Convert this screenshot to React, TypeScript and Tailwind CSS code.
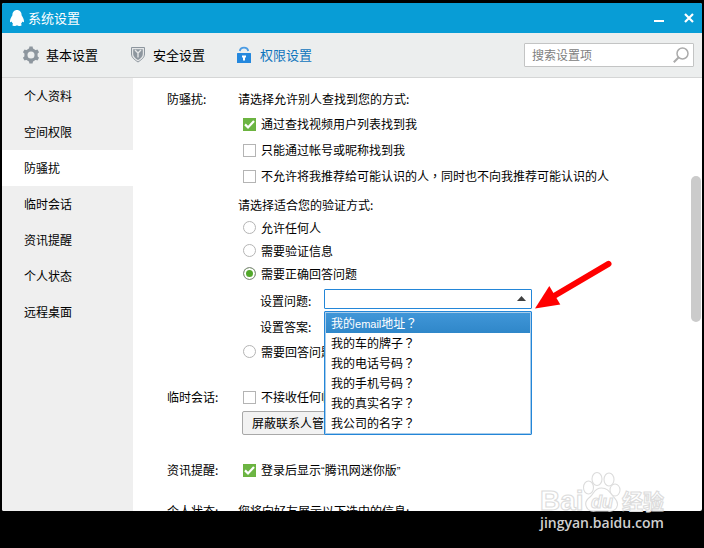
import React, { useState } from 'react';

const sidebarItems = ['个人资料', '空间权限', '防骚扰', '临时会话', '资讯提醒', '个人状态', '远程桌面'];

const questions = [
  '我的email地址？',
  '我的车的牌子？',
  '我的电话号码？',
  '我的手机号码？',
  '我的真实名字？',
  '我公司的名字？',
];

const PenguinIcon = () => (
  <svg width="16" height="18" viewBox="0 0 16 18" fill="#fff" aria-hidden="true">
    <path d="M8 1C5.2 1 3.4 3.2 3.4 6.2C2.2 8 1 10.2 1 12.2C1 13.4 1.8 13.4 2.7 12.4C3 13.5 3.5 14.3 4.2 15C2.8 15.7 3 17 5.2 17C6.6 17 7.5 16.7 8 16.2C8.5 16.7 9.4 17 10.8 17C13 17 13.2 15.7 11.8 15C12.5 14.3 13 13.5 13.3 12.4C14.2 13.4 15 13.4 15 12.2C15 10.2 13.8 8 12.6 6.2C12.6 3.2 10.8 1 8 1Z" />
  </svg>
);

const GearIcon = () => (
  <svg width="18" height="18" viewBox="0 0 18 18" aria-hidden="true">
    <circle cx="9" cy="9" r="5.1" fill="none" stroke="#8d969e" strokeWidth="3.2" />
    <g fill="#8d969e">
      {[0, 60, 120, 180, 240, 300].map((deg) => (
        <path key={deg} d="M6.8 3.6L7.4 0.6H10.6L11.2 3.6Z" transform={`rotate(${deg} 9 9)`} />
      ))}
    </g>
  </svg>
);

const ShieldIcon = () => (
  <svg width="18" height="18" viewBox="-1 1 18 18" aria-hidden="true">
    <path d="M1.5 2.500H14.5V9C14.5 12.4 11.8 14.6 8 17C4.2 14.6 1.5 12.4 1.5 9Z" fill="#e4e6e7" stroke="#8d969e" />
    <path d="M3.2 4.2H12.8V9C12.8 11.6 10.8 13.2 8 15C5.2 13.2 3.2 11.6 3.2 9Z" fill="#8d969e" />
    <path d="M5 5L8 8L11 5M8 8V12.500" fill="none" stroke="#e4e6e7" strokeWidth="1.4" />
  </svg>
);

const LockIcon = () => (
  <svg width="18" height="18" viewBox="0 0 18 18" aria-hidden="true">
    <path d="M3.800 5C4.500 0.600 11.500 0.600 12.200 5" fill="none" stroke="#4a9be3" strokeWidth="1.8" />
    <rect x="1" y="7" width="14" height="10" rx="0.6" fill="#2488de" />
    <path d="M6 9.6H10V11.4H9V14.4H7V11.4H6Z" fill="#fff" />
  </svg>
);

const tabs = [
  { name: '基本设置', icon: <GearIcon /> },
  { name: '安全设置', icon: <ShieldIcon /> },
  { name: '权限设置', icon: <LockIcon /> },
];

// latin words and quotes get a narrow face, full-width marks one that centres them
const MixedText: React.FC<{ text: string }> = ({ text }) => (
  <span>
    {text.split(/([a-z“”]+|[，？])/).map((part, i) => {
      if (/^[a-z“”]+$/.test(part)) {
        return <span key={i} className="font-['Liberation_Sans',sans-serif] text-[11px]">{part}</span>;
      }
      if (/^[，？]$/.test(part)) {
        return <span key={i} className="font-['Noto_Sans_CJK_TC',sans-serif]">{part}</span>;
      }
      return part;
    })}
  </span>
);

interface CheckProps {
  id: string;
  label: string;
  defaultChecked?: boolean;
}

const CheckRow: React.FC<CheckProps> = ({ id, label, defaultChecked }) => (
  <div className="flex h-[26px] items-center gap-[5px] pl-[5px]">
    <span className="grid shrink-0">
      <input
        id={id}
        type="checkbox"
        defaultChecked={defaultChecked}
        className="peer col-start-1 row-start-1 size-[13px] appearance-none border border-[#b4b4b4] bg-white checked:border-[#6cb33f] checked:bg-[#6cb544]"
      />
      <svg
        className="pointer-events-none invisible col-start-1 row-start-1 peer-checked:visible"
        width="13"
        height="13"
        viewBox="0 0 13 13"
        aria-hidden="true"
      >
        <path d="M2 6.4L5 9.4L11 3" fill="none" stroke="#fff" strokeWidth="2.2" />
      </svg>
    </span>
    <label htmlFor={id} className="whitespace-nowrap">
      <MixedText text={label} />
    </label>
  </div>
);

const RadioRow: React.FC<CheckProps> = ({ id, label, defaultChecked }) => (
  <div className="flex h-[23px] items-center gap-[5px] pl-[5px]">
    <input
      id={id}
      type="radio"
      name="verify"
      defaultChecked={defaultChecked}
      className="size-[13px] shrink-0 appearance-none rounded-full border border-[#b4b4b4] bg-white checked:border-[#8c8c8c] checked:bg-[#52a82b] checked:shadow-[inset_0_0_0_2px_white]"
    />
    <label htmlFor={id} className="whitespace-nowrap">{label}</label>
  </div>
);

interface SectionProps {
  title: string;
  titleClass?: string;
  className?: string;
  children: React.ReactNode;
}

const Section: React.FC<SectionProps> = ({ title, titleClass = 'h-[26px]', className = '', children }) => (
  <section className={`flex ${className}`}>
    <h2 className={`flex w-[71px] shrink-0 items-center ${titleClass}`}>{title}</h2>
    <div className="min-w-0 flex-1">{children}</div>
  </section>
);

const QuestionSelect = () => {
  const [active, setActive] = useState(0);

  return (
    <div className="relative h-[26px] w-[208px] pt-px">
      <select
        id="question"
        defaultValue=""
        className="block h-5 w-full appearance-none rounded-[1px] border border-[#2386d8] bg-white px-1.5"
      >
        <option value=""></option>
        {questions.map((q) => (
          <option key={q} value={q}>{q}</option>
        ))}
      </select>
      <svg className="pointer-events-none absolute top-2 right-1.5" width="9" height="5" viewBox="0 0 9 5" aria-hidden="true">
        <path d="M4.5 0L9 5H0Z" fill="#404040" />
      </svg>

      <ul
        role="listbox"
        aria-label="设置问题"
        className="absolute top-[23px] left-0 z-10 w-full rounded-[1px] border border-[#2386d8] bg-white p-px shadow-[inset_0_0_0_1px_#a9cdeb]"
      >
        {questions.map((q, i) => (
          <li
            key={q}
            role="option"
            aria-selected={i === active}
            onMouseEnter={() => setActive(i)}
            className={`flex h-5 items-center px-[5px] ${
              i === active ? 'bg-linear-to-b from-[#4096d8] to-[#2f87c9] text-white' : 'text-black'
            }`}
          >
            <MixedText text={q} />
          </li>
        ))}
      </ul>

      {/* red pointer */}
      <svg className="pointer-events-none absolute -top-7 left-[211px] z-20" width="78" height="50" viewBox="0 0 78 50" aria-hidden="true">
        <path d="M19 36L73.5 3.8" stroke="#f00" strokeWidth="6" strokeLinecap="round" />
        <path d="M0 48.5L14.3 26L25.3 44.5Z" fill="#f00" />
      </svg>
    </div>
  );
};

const Watermark = () => (
  <div className="pointer-events-none absolute right-[38px] bottom-[17px] w-[126px]" aria-hidden="true">
    <svg width="126" height="45" viewBox="0 0 126 45" className="block">
      <g fill="#fff" stroke="#dcdcdc" strokeWidth="1.1">
        <text x="0" y="40" fontSize="28" fontWeight="700" fontFamily="Liberation Sans, sans-serif">Bai</text>
        <text x="82" y="39" fontSize="21" fontWeight="700" fontFamily="Noto Sans CJK SC, sans-serif">经验</text>
        <ellipse cx="48.500" cy="17.500" rx="5" ry="6.500" />
        <ellipse cx="57" cy="9" rx="5" ry="6.500" />
        <ellipse cx="69" cy="9.500" rx="5" ry="6.500" />
        <ellipse cx="75" cy="20" rx="5" ry="6" />
        <path d="M61.500 18C54 18 54 24 50 27C46 30 45 34 46.500 37C48 41 52 41.500 56 41H68C73 42 77 39 77.500 35C78 30 74 28 72 25C69 21 67 18 61.500 18Z" />
        <text x="51" y="38" fontSize="18" fontWeight="700" fontStyle="italic" fontFamily="Liberation Sans, sans-serif">du</text>
      </g>
    </svg>
    <p className="font-['Open_Sans',sans-serif] text-sm leading-4 font-semibold whitespace-nowrap text-[#cfcfcf]">jingyan.baidu.com</p>
  </div>
);

const App = () => {
  const [section, setSection] = useState('防骚扰');

  return (
    <div className="relative flex h-screen flex-col bg-black px-0.5 pt-[3px] pb-[37px] font-['Noto_Sans_CJK_SC',sans-serif] text-xs text-black">
      <div className="flex min-h-0 flex-1 flex-col overflow-hidden rounded-[2px] bg-white">
        <header className="flex h-[30px] shrink-0 items-center bg-[#089dd6] pr-2 pl-[7px] text-white">
          <PenguinIcon />
          <h1 className="ml-[3px] flex-1 text-[13px]">系统设置</h1>
          <button type="button" aria-label="最小化" className="mr-5">
            <svg width="10" height="10" viewBox="0 0 10 10">
              <path d="M0 8H10" stroke="#fff" strokeWidth="2" />
            </svg>
          </button>
          <button type="button" aria-label="关闭">
            <svg width="10" height="10" viewBox="0 0 10 10">
              <path d="M1 1L9 9M9 1L1 9" stroke="#fff" strokeWidth="2.2" />
            </svg>
          </button>
        </header>

        <nav className="flex h-[45px] shrink-0 items-center border-b border-[#d5d6d6] bg-[#eceeee] pr-2 pl-5">
          <div className="flex flex-1 gap-[31px] text-[13px]">
            {tabs.map((tab) => (
              <button
                key={tab.name}
                type="button"
                className={`flex items-center gap-1.5 ${tab.name === '权限设置' ? 'text-[#0f75bd]' : 'text-black'}`}
              >
                {tab.icon}
                {tab.name}
              </button>
            ))}
          </div>
          <div className="flex h-6 w-[170px] items-center rounded-[1px] border border-[#c3c4c4] bg-white pr-1 pl-[7px]">
            <input
              type="text"
              aria-label="搜索设置项"
              placeholder="搜索设置项"
              className="min-w-0 flex-1 outline-none placeholder:text-[#808080]"
            />
            <svg width="16" height="16" viewBox="0 0 16 16" fill="none" stroke="#ababab" aria-hidden="true">
              <circle cx="9.500" cy="6.500" r="5.500" strokeWidth="1.5" />
              <path d="M5.500 10.500L0.800 15.200" strokeWidth="2" />
            </svg>
          </div>
        </nav>

        <div className="flex min-h-0 flex-1">
          <aside className="w-[131px] shrink-0 bg-[#efefef]">
            {sidebarItems.map((item) => (
              <button
                key={item}
                type="button"
                onClick={() => setSection(item)}
                className={`flex h-9 w-full items-center pl-[22px] ${item === section ? 'bg-white' : ''}`}
              >
                {item}
              </button>
            ))}
          </aside>

          <main className="min-w-0 flex-1 overflow-hidden pt-[9px] pl-[34px]">
            <Section title="防骚扰:" titleClass="h-6">
              <p className="flex h-6 items-center">请选择允许别人查找到您的方式:</p>
              <CheckRow id="find-video" label="通过查找视频用户列表找到我" defaultChecked />
              <CheckRow id="find-account" label="只能通过帐号或昵称找到我" />
              <CheckRow id="no-recommend" label="不允许将我推荐给可能认识的人，同时也不向我推荐可能认识的人" />

              <p className="mt-1 flex h-[23px] items-center">请选择适合您的验证方式:</p>
              <RadioRow id="allow-all" label="允许任何人" />
              <RadioRow id="need-info" label="需要验证信息" />
              <RadioRow id="need-correct" label="需要正确回答问题" defaultChecked />
              <div className="mt-[3px] flex pl-[22px]">
                <label htmlFor="question" className="flex h-[26px] w-16 items-center">设置问题:</label>
                <QuestionSelect />
              </div>
              <div className="flex pl-[22px]">
                <label htmlFor="answer" className="flex h-[26px] w-16 items-center">设置答案:</label>
                <input id="answer" type="text" className="h-5 w-[206px] border border-[#b4b4b4] px-1.5" />
              </div>
              <RadioRow id="need-confirm" label="需要回答问题并由我确认" />
            </Section>

            <Section title="临时会话:" className="mt-[21px]">
              <CheckRow id="no-temp" label="不接收任何临时会话消息" />
              <button
                type="button"
                className="mt-px ml-1 h-6 rounded-[2px] border border-[#a8a8a8] bg-[#f2f2f2] px-[9px]"
              >
                屏蔽联系人管理
              </button>
            </Section>

            <Section title="资讯提醒:" className="mt-[22px]">
              <CheckRow id="mini-news" label="登录后显示“腾讯网迷你版”" defaultChecked />
            </Section>

            <Section title="个人状态:" titleClass="h-6" className="mt-4">
              <p className="flex h-6 items-center">您将向好友展示以下选中的信息:</p>
            </Section>
          </main>

          {/* scrollbar */}
          <div className="w-[11px] shrink-0 pt-[98px] pr-px">
            <div className="h-[146px] rounded-full bg-[#cbcbcb]" />
          </div>
        </div>
      </div>

      <Watermark />
    </div>
  );
};

export default App;
